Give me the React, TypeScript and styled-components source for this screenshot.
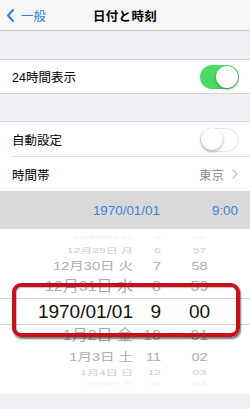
import React from "react";
import styled, { createGlobalStyle } from "styled-components";

const GlobalStyle = createGlobalStyle`
  html, body { margin: 0; padding: 0; background: #efeff4; }
  body {
    font-family: "Liberation Sans", "Noto Sans CJK JP", sans-serif;
    -webkit-font-smoothing: antialiased;
  }
  * { box-sizing: border-box; }
`;

const Screen = styled.div`
  width: 250px;
  height: 409px;
  overflow: hidden;
  display: flex;
  flex-direction: column;
  background: #efeff4;
`;

const NavBar = styled.div`
  height: 31px;
  flex: none;
  background: #f7f7f8;
  border-bottom: 1px solid #c8c7cc;
  display: grid;
  grid-template-columns: 1fr auto 1fr;
  align-items: center;
`;

const Back = styled.div`
  display: flex;
  align-items: center;
  gap: 6px;
  padding-left: 6px;
  color: #2f7cdf;
  font-size: 12.5px;
`;

const Title = styled.div`
  font-size: 12.5px;
  font-weight: 600;
  color: #000;
  letter-spacing: 0.3px;
`;

const Spacer = styled.div<{ $h: number }>`
  height: ${(p) => p.$h}px;
  flex: none;
`;

const Group = styled.div`
  background: #fff;
  border-top: 1px solid #d6d6da;
  border-bottom: 1px solid #d6d6da;
  flex: none;
`;

const Row = styled.div<{ $h: number; $sep?: boolean }>`
  height: ${(p) => p.$h}px;
  display: flex;
  align-items: center;
  justify-content: space-between;
  padding: 0 12px 0 12px;
  position: relative;
  font-size: 12.5px;
  color: #000;
  ${(p) =>
    p.$sep
      ? `&::after { content: ""; position: absolute; left: 12px; right: 0; bottom: 0; height: 1px; background: #e1e1e4; }`
      : ""}
`;

const Toggle = styled.div<{ $on: boolean }>`
  width: 39px;
  height: 24px;
  border-radius: 12px;
  background: ${(p) => (p.$on ? "#4cd964" : "#fff")};
  border: ${(p) => (p.$on ? "none" : "1.5px solid #e5e5ea")};
  position: relative;
  margin-right: -1px;
  &::after {
    content: "";
    position: absolute;
    top: ${(p) => (p.$on ? "1px" : "-0.5px")};
    ${(p) => (p.$on ? "right: 1px;" : "left: -0.5px;")}
    width: 22px;
    height: 22px;
    border-radius: 50%;
    background: #fff;
    box-shadow: 0 2px 3px rgba(0, 0, 0, 0.25), 0 0 0 0.5px rgba(0, 0, 0, 0.08);
  }
`;

const Detail = styled.div`
  display: flex;
  align-items: center;
  gap: 8px;
  color: #8e8e93;
  font-size: 12.5px;
`;

const DateBar = styled.div`
  height: 37px;
  flex: none;
  background: #d9d9dc;
  display: flex;
  justify-content: flex-end;
  align-items: center;
  gap: 52px;
  padding-right: 12px;
  color: #3f83d6;
  font-size: 13.4px;
`;

const Picker = styled.div`
  height: 165px;
  flex: none;
  background: #fff;
  position: relative;
  display: flex;
  flex-direction: column;
`;

const PickRow = styled.div<{ $h: number; $size: number; $color: string; $sy: number; $band?: boolean }>`
  height: ${(p) => p.$h}px;
  flex: none;
  display: grid;
  grid-template-columns: 135px 26px 75px;
  align-items: center;
  font-size: ${(p) => p.$size}px;
  color: ${(p) => p.$color};
  white-space: nowrap;
  overflow: hidden;
  ${(p) =>
    p.$band
      ? `border-top: 1px solid #d4d4d8; border-bottom: 1px solid #d4d4d8;`
      : ""}
  & > span {
    display: block;
    transform: scaleY(${(p) => p.$sy});
    line-height: 1;
  }
`;

const DateCell = styled.span`
  text-align: right;
  padding-right: 2px;
`;

const HourCell = styled.span`
  text-align: right;
`;

const MinCell = styled.span`
  text-align: center;
  padding-left: 2px;
`;

const Highlight = styled.div`
  position: absolute;
  left: 12px;
  top: 54px;
  width: 228px;
  height: 54px;
  border: 4px solid #c8101b;
  border-radius: 9px;
  box-shadow: 1px 2px 2px rgba(0, 0, 0, 0.55), inset 1px 1px 1px rgba(0, 0, 0, 0.25);
  pointer-events: none;
`;

const Chevron = ({ color, w, h, sw }: { color: string; w: number; h: number; sw: number }) => (
  <svg width={w} height={h} viewBox={`0 0 ${w} ${h}`}>
    <polyline
      points={`${w - sw},${sw} ${sw},${h / 2} ${w - sw},${h - sw}`}
      fill="none"
      stroke={color}
      strokeWidth={sw}
      strokeLinecap="round"
      strokeLinejoin="round"
    />
  </svg>
);

const RightChevron = () => (
  <svg width={6} height={10} viewBox="0 0 6 10">
    <polyline points="1,1 5,5 1,9" fill="none" stroke="#c7c7cc" strokeWidth={1.4} strokeLinecap="round" strokeLinejoin="round" />
  </svg>
);

type PRow = {
  d: string;
  h: string;
  m: string;
  height: number;
  size: number;
  color: string;
  sy: number;
  band?: boolean;
};

const rows: PRow[] = [
  { d: "12月28日 日", h: "5", m: "56", height: 16, size: 11, color: "#efefef", sy: 0.3 },
  { d: "12月29日 月", h: "6", m: "57", height: 12, size: 12, color: "#cdcdcd", sy: 0.55 },
  { d: "12月30日 火", h: "7", m: "58", height: 19, size: 14.5, color: "#adadad", sy: 0.8 },
  { d: "12月31日 水", h: "8", m: "59", height: 22, size: 16, color: "#acacac", sy: 0.9 },
  { d: "1970/01/01", h: "9", m: "00", height: 27, size: 19, color: "#111", sy: 1, band: true },
  { d: "1月2日 金", h: "10", m: "01", height: 22, size: 16, color: "#acacac", sy: 0.9 },
  { d: "1月3日 土", h: "11", m: "02", height: 20, size: 14.5, color: "#adadad", sy: 0.8 },
  { d: "1月4日 日", h: "12", m: "03", height: 11, size: 12, color: "#cdcdcd", sy: 0.55 },
  { d: "1月5日 月", h: "13", m: "04", height: 8, size: 11, color: "#efefef", sy: 0.3 },
];

export default function App() {
  return (
    <>
      <GlobalStyle />
      <Screen>
        <NavBar>
          <Back>
            <Chevron color="#2f7cdf" w={9} h={15} sw={2} />
            <span>一般</span>
          </Back>
          <Title>日付と時刻</Title>
          <div />
        </NavBar>
        <Spacer $h={28} />
        <Group>
          <Row $h={33}>
            <span>24時間表示</span>
            <Toggle $on />
          </Row>
        </Group>
        <Spacer $h={27} />
        <Group>
          <Row $h={35} $sep>
            <span>自動設定</span>
            <Toggle $on={false} />
          </Row>
          <Row $h={34}>
            <span>時間帯</span>
            <Detail>
              <span>東京</span>
              <RightChevron />
            </Detail>
          </Row>
        </Group>
        <DateBar>
          <span>1970/01/01</span>
          <span>9:00</span>
        </DateBar>
        <Picker>
          {rows.map((r, i) => (
            <PickRow key={i} $h={r.height} $size={r.size} $color={r.color} $sy={r.sy} $band={r.band}>
              <DateCell>{r.d}</DateCell>
              <HourCell>{r.h}</HourCell>
              <MinCell>{r.m}</MinCell>
            </PickRow>
          ))}
          <Highlight />
        </Picker>
      </Screen>
    </>
  );
}
